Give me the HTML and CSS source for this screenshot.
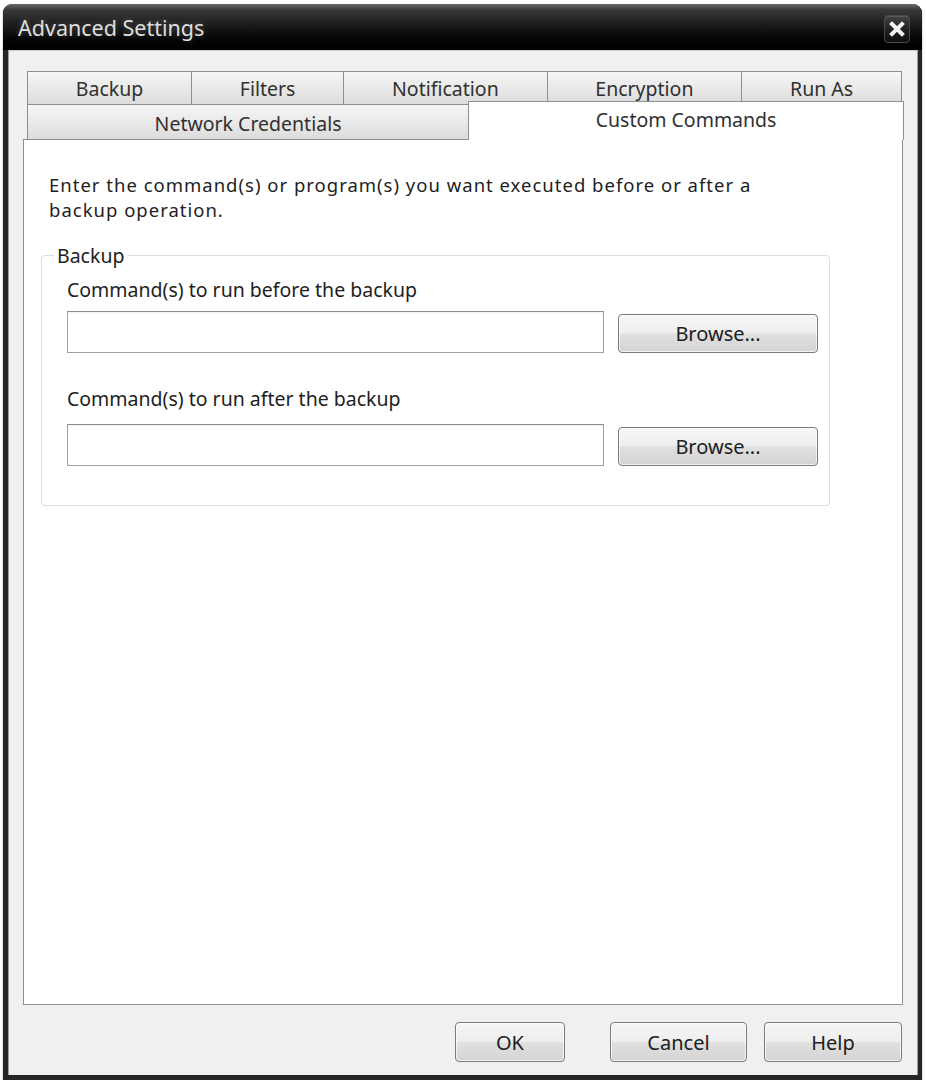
FILE: index.html
```html
<!DOCTYPE html>
<html lang="en">
<head>
    <meta charset="UTF-8">
    <meta name="viewport" content="width=device-width, initial-scale=1.0">
    <title>Advanced Settings</title>
    <link rel="stylesheet" href="styles.css">
</head>
<body>
    <div class="window">
        <div class="titlebar">
            <span class="title">Advanced Settings</span>
            <button class="close" title="Close">
                <svg width="18" height="16" viewBox="0 0 18 16">
                    <path d="M4 3 L14 13 M14 3 L4 13" stroke="#f2f2f2" stroke-width="4" stroke-linecap="square"/>
                </svg>
            </button>
        </div>
        <div class="client">
            <div class="tabs">
                <div class="tab-row">
                    <div class="tab">Backup</div>
                    <div class="tab">Filters</div>
                    <div class="tab">Notification</div>
                    <div class="tab">Encryption</div>
                    <div class="tab">Run As</div>
                </div>
                <div class="tab-row tab-row-front">
                    <div class="tab">Network Credentials</div>
                    <div class="tab selected">Custom Commands</div>
                </div>
            </div>
            <div class="panel">
                <p class="intro">Enter the command(s) or program(s) you want executed before or after a<br>backup operation.</p>
                <fieldset class="group">
                    <legend>Backup</legend>
                    <div class="field">
                        <label for="cmd-before">Command(s) to run before the backup</label>
                        <div class="field-row">
                            <input type="text" id="cmd-before">
                            <button class="button browse">Browse...</button>
                        </div>
                    </div>
                    <div class="field">
                        <label for="cmd-after">Command(s) to run after the backup</label>
                        <div class="field-row">
                            <input type="text" id="cmd-after">
                            <button class="button browse">Browse...</button>
                        </div>
                    </div>
                </fieldset>
            </div>
            <div class="footer">
                <button class="button ok">OK</button>
                <button class="button cancel">Cancel</button>
                <button class="button help">Help</button>
            </div>
        </div>
    </div>
</body>
</html>
```

FILE: styles.css
```css
body {
    margin: 0;
    padding: 0;
    background-color: #fff;
    font-family: "Noto Sans", "Open Sans", sans-serif;
    font-size: 19.5px;
    color: #1e1e1e;
}
.window {
    margin: 4px 0 0 3px;
    width: 919px;
    height: 1076px;
    display: flex;
    flex-direction: column;
    background-color: #262626;
    border-radius: 9px 9px 0 0;
    box-shadow: 0 1px 2px rgba(0, 0, 0, 0.4);
}
.titlebar {
    height: 46px;
    flex: none;
    display: flex;
    align-items: center;
    justify-content: space-between;
    padding: 0 12px 0 15px;
    border-radius: 9px 9px 0 0;
    background: linear-gradient(to bottom, #6a6a6a 0, #3a3a3a 12%, #1c1c1c 45%, #050505 75%, #000 100%);
}
.title {
    color: #dedede;
    font-size: 21.5px;
    text-shadow: 0 0 6px rgba(255, 255, 255, 0.25);
    padding-top: 1px;
}
.close {
    width: 26px;
    height: 28px;
    margin-top: 4px;
    padding: 0;
    display: flex;
    align-items: center;
    justify-content: center;
    border: 1px solid #4a4a4a;
    border-radius: 4px;
    background: linear-gradient(to bottom, #444, #222 50%, #0e0e0e);
    box-shadow: inset 0 1px 0 rgba(255, 255, 255, 0.12);
}
.client {
    flex: 1;
    display: flex;
    flex-direction: column;
    margin: 0 4px 5px 5px;
    padding: 20px 14px 13px 14px;
    background-color: #f0f0f0;
    border-top: 1px solid #cfcfcf;
    border-left: 1px solid #9a9a9a;
    border-right: 1px solid #9a9a9a;
}

/* Two rows of tabs, the front row carries the selected tab */
.tabs {
    padding-left: 4px;
    padding-right: 1px;
}
.tab-row {
    display: flex;
}
.tab {
    flex: 1 1 auto;
    height: 33px;
    display: flex;
    align-items: center;
    justify-content: center;
    padding: 0 20px;
    margin-left: -1px;
    border: 1px solid #8e8f94;
    border-bottom: none;
    background: linear-gradient(to bottom, #f6f6f6, #e9e9e9 50%, #dcdcdc);
    color: #303030;
    box-sizing: border-box;
}
.tab:first-child {
    margin-left: 0;
}
.tab-row-front .tab {
    height: 35px;
    padding-top: 2px;
}
.tab.selected {
    position: relative;
    z-index: 1;
    height: 39px;
    margin-top: -3px;
    margin-right: -2px;
    margin-bottom: -1px;
    padding-top: 0;
    padding-bottom: 4px;
    background: #fff;
}
.panel {
    flex: 1;
    background-color: #fff;
    border: 1px solid #8e8f94;
    padding: 32px 0 0 25px;
}
.intro {
    margin: 0;
    font-size: 18.5px;
    line-height: 25px;
    letter-spacing: 1px;
}

/* Group box */
.group {
    width: 789px;
    box-sizing: border-box;
    margin: 22px 0 0 -8px;
    padding: 0 0 39px 12px;
    border: 1px solid #d8dde2;
    border-radius: 4px;
}
.group legend {
    padding: 0 3px;
    line-height: 23px;
}
.field {
    margin-left: 13px;
    margin-top: 11px;
}
.field + .field {
    margin-top: 34px;
}
.field label {
    display: block;
    line-height: 23px;
    margin-bottom: 10px;
}
.field + .field label {
    margin-bottom: 14px;
}
.field-row {
    display: flex;
    align-items: center;
    gap: 14px;
}
.field-row input {
    width: 537px;
    height: 42px;
    box-sizing: border-box;
    margin: 0;
    border: 1px solid #a3a3a3;
    border-top-color: #8c8c8c;
    box-shadow: inset 0 1px 2px rgba(0, 0, 0, 0.06);
    font-family: inherit;
    font-size: 19.5px;
}
.button {
    height: 40px;
    box-sizing: border-box;
    border: 1px solid #7a7a7a;
    border-radius: 4px;
    background: linear-gradient(to bottom, #f6f6f6, #eeeeee 48%, #e0e0e0 52%, #d4d4d4);
    box-shadow: inset 0 0 0 1px rgba(255, 255, 255, 0.7);
    font-family: inherit;
    font-size: 20px;
    color: #202020;
    padding: 0;
}
.browse {
    width: 200px;
    height: 39px;
    margin-top: 2px;
}
.footer {
    flex: none;
    display: flex;
    justify-content: flex-end;
    margin-top: 17px;
    padding-right: 1px;
}
.ok {
    width: 110px;
    margin-right: 45px;
}
.cancel {
    width: 137px;
    margin-right: 17px;
}
.help {
    width: 138px;
}
```
